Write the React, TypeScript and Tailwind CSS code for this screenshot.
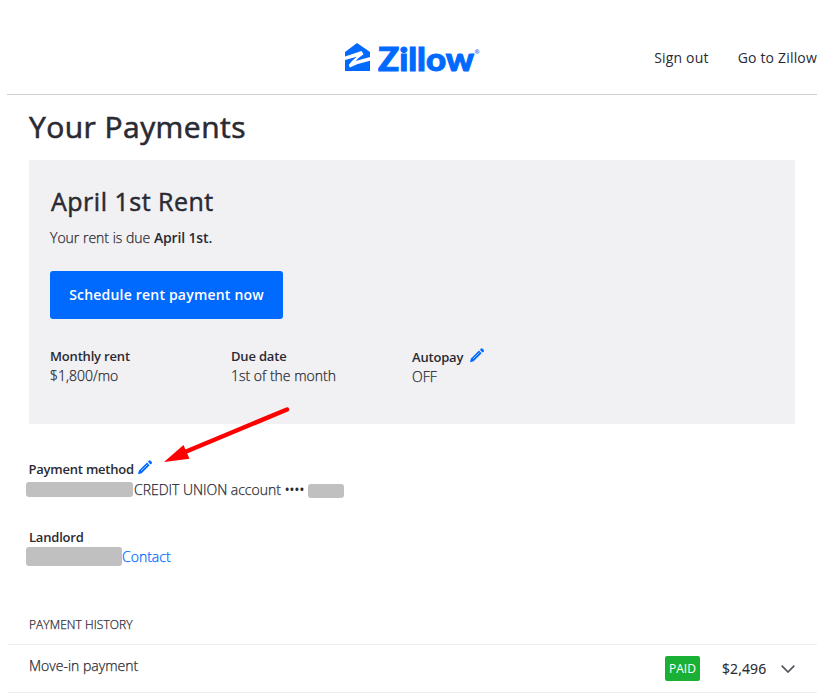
import React from "react";

function Pencil() {
  return (
    <svg width="16" height="16" viewBox="0 0 16 16" className="shrink-0">
      <path d="M1 15.2 2 11.6 10 3.6 12.6 6.2 4.6 14.2Z" fill="#006aff" />
      <path d="M10.9 2.7 12.1 1.5Q12.7 1.1 13.3 1.6L14.8 3.1Q15.2 3.7 14.8 4.2L13.5 5.4Z" fill="#006aff" />
      <path d="M4 12 10.4 5.6" stroke="#fff" strokeWidth=".6" />
    </svg>
  );
}

function Logo() {
  return (
    <svg width="136" height="36" viewBox="0 0 136 36" className="block overflow-visible">
      <path d="M13 3 26 12V31H1V12Z" fill="#006aff" />
      <path d="M1 16.5 17.5 11 19.6 14.2Q14.5 17.5 11.6 21L26 17V20.8Q15 23 5.8 27.6L4.8 25Q8 20.5 12.7 16.8L1 20Z" fill="#fff" />
      <text x="34" y="30.5" fontSize="33" fontWeight="900" textLength="96" lengthAdjust="spacingAndGlyphs" fill="#006aff" stroke="#006aff" strokeWidth="1" className="font-['Lato',sans-serif]">Zillow</text>
      <text x="130.5" y="14" fontSize="6" fontWeight="700" fill="#006aff" className="font-['Open_Sans',sans-serif]">®</text>
    </svg>
  );
}

export default function App() {
  return (
    <div className="relative h-[699px] w-[822px] overflow-hidden bg-white font-['Open_Sans',sans-serif] text-sm leading-5 text-[#2a2a33]">
      <header className="ml-[7px] grid h-[95px] w-[810px] grid-cols-[337px_1fr_auto] border-b border-[#d1d1d5]">
        <span />
        <div className="pt-10"><Logo /></div>
        <nav className="flex gap-[29px] pt-12 tracking-[0.18px]">
          <a>Sign out</a>
          <a>Go to Zillow</a>
        </nav>
      </header>
      <main className="font-light">
        <h1 className="ml-[29px] h-[65px] pt-3 text-[30px] leading-10 font-normal tracking-[0.45px] [-webkit-text-stroke:0.6px_#2a2a33]">Your Payments</h1>
        <section className="ml-[29px] h-[264px] w-[766px] bg-[#f1f1f4] pt-[25px] pl-[21px]">
          <h2 className="pl-px text-[25px] leading-8 font-normal tracking-[0.5px] [-webkit-text-stroke:0.5px_#2a2a33]">April 1st Rent</h2>
          <p className="mt-[11px] [-webkit-text-stroke:0.25px]">Your rent is due <b className="font-semibold tracking-[-0.15px] [-webkit-text-stroke:0]">April 1st.</b></p>
          <button className="mt-[23px] block h-12 w-[233px] rounded-[3px] bg-[#006aff] font-semibold tracking-[0.2px] text-white">Schedule rent payment now</button>
          <dl className="mt-[27px] grid grid-cols-[181px_181px_1fr]">
            <div><dt className="text-[13px] font-semibold tracking-[-0.18px]">Monthly rent</dt><dd className="[-webkit-text-stroke:0.25px]">$1,800/mo</dd></div>
            <div><dt className="text-[13px] font-semibold tracking-[-0.18px]">Due date</dt><dd className="[-webkit-text-stroke:0.25px]">1st of the month</dd></div>
            <div className="pt-px"><dt className="flex gap-[6px] text-[13px] font-semibold tracking-[-0.18px]">Autopay <Pencil /></dt><dd className="[-webkit-text-stroke:0.25px]">OFF</dd></div>
          </dl>
        </section>
        <section className="mt-[35px] ml-[26px]">
          <h3 className="flex gap-[3px] pl-[2.5px] text-[13px] font-semibold tracking-[-0.22px]">Payment method <Pencil /></h3>
          <div className="mt-px flex h-5">
            <span className="mt-[2px] h-[15px] w-[107px] rounded-[3px] bg-[#c0c0c0]" />
            <span className="ml-px w-[171px] whitespace-nowrap tracking-[-0.03px] [-webkit-text-stroke:0.25px]">CREDIT UNION account <span className="font-normal tracking-[-0.3px] [-webkit-text-stroke:0]">••••</span></span>
            <span className="mt-[4px] ml-[3px] h-[14px] w-9 rounded-[3px] bg-[#c0c0c0]" />
          </div>
        </section>
        <section className="mt-[27px] ml-[26px]">
          <h3 className="pl-[3px] text-[13px] font-semibold tracking-[-0.2px]">Landlord</h3>
          <div className="flex h-5">
            <span className="h-[19px] w-24 rounded-[3px] bg-[#c0c0c0]" />
            <a className="text-[#006aff] [-webkit-text-stroke:0.25px]">Contact</a>
          </div>
        </section>
        <section className="mt-12 ml-2 w-[809px]">
          <h3 className="h-[30px] border-b border-[#eeeef0] pl-[21px] text-xs leading-5 tracking-[0.06px] [-webkit-text-stroke:0.25px]">PAYMENT HISTORY</h3>
          <div className="flex h-12 items-center border-b border-[#eeeef0] pl-[21px]">
            <span className="mb-[5px] flex-1 [-webkit-text-stroke:0.25px]">Move-in payment</span>
            <span className="flex h-[25px] w-[35px] items-center justify-center rounded-[2px] bg-[#19b035] text-xs font-normal text-white">PAID</span>
            <span className="ml-[22px] w-[45px] font-normal tracking-[0.1px] [-webkit-text-stroke:0.15px_#2a2a33]">$2,496</span>
            <svg width="14" height="8" viewBox="0 0 14 8" className="mr-[22px] ml-[14px]" fill="none" stroke="#54545f" strokeWidth="1.7"><path d="M.7.7 7 7 13.3.7" /></svg>
          </div>
        </section>
      </main>
      <svg className="absolute top-[404px] left-[162px]" width="130" height="62" viewBox="0 0 130 62">
        <path d="M125 5.5 23 48" stroke="#f00" strokeWidth="4.5" strokeLinecap="round" />
        <path d="M2 58 21.5 41 27.5 54.7Z" fill="#f00" />
      </svg>
    </div>
  );
}
